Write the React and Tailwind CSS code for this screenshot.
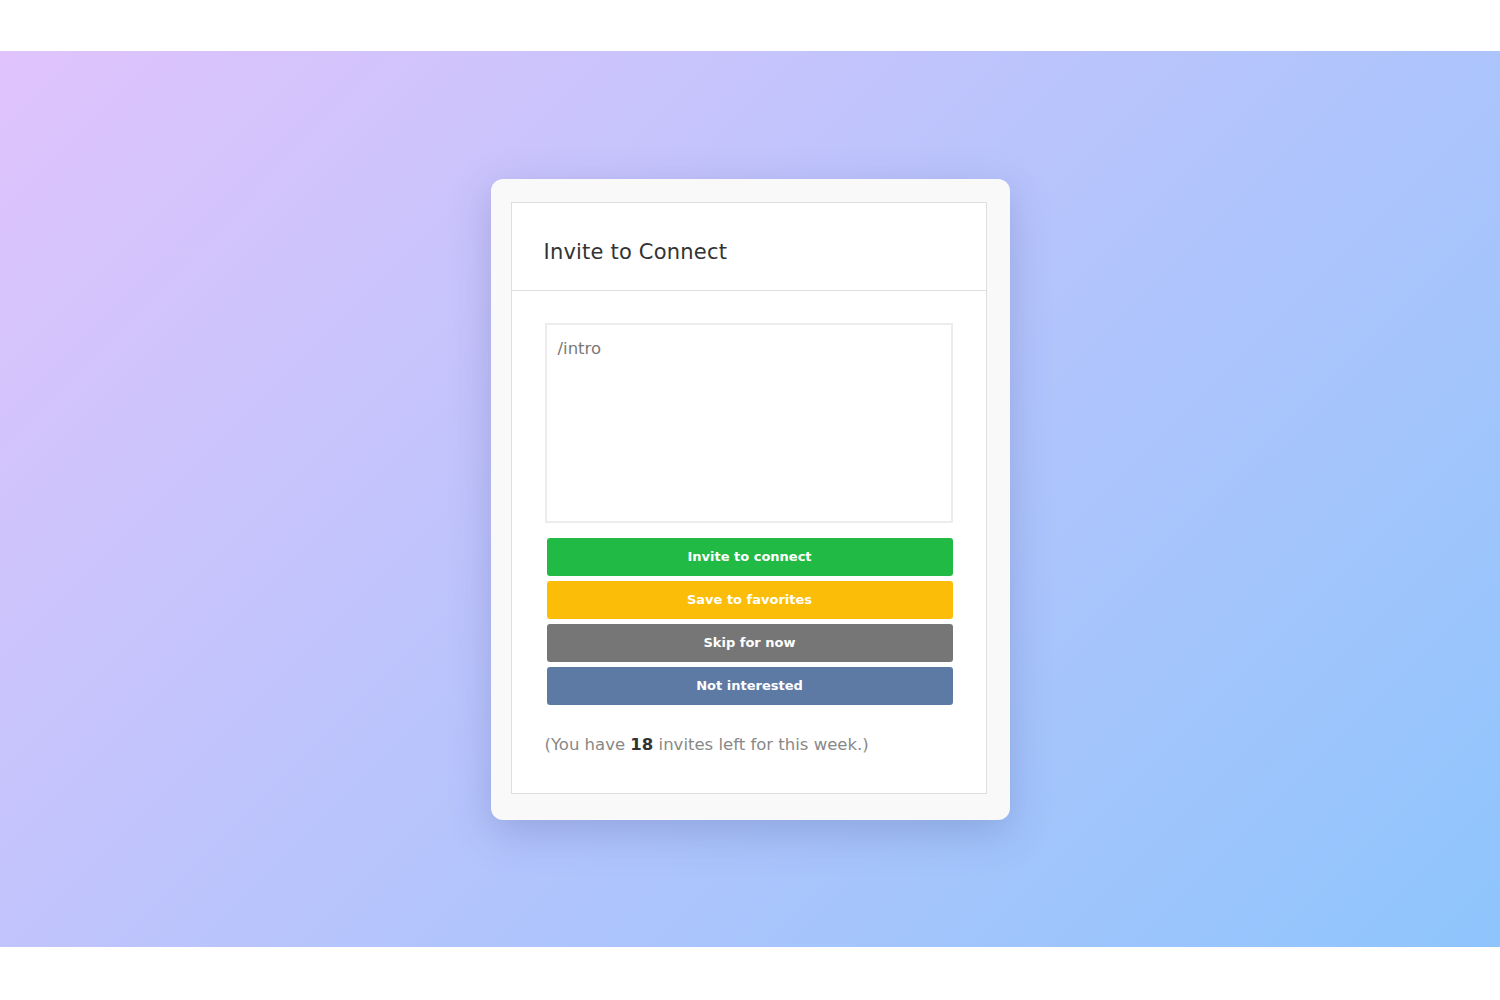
export default function App() {
  const buttons = [
    { label: "Invite to connect", cls: "bg-[#21ba45]" },
    { label: "Save to favorites", cls: "bg-[#fbbd08]" },
    { label: "Skip for now", cls: "bg-[#767676]" },
    { label: "Not interested", cls: "bg-[#5d7aa5]" },
  ];

  return (
    <div className="min-h-[1000px] bg-white pt-[51px] font-['DejaVu_Sans',sans-serif]">
      <div className="h-[896px] bg-[linear-gradient(135deg,#e0c3fc_0%,#8ec5fc_100%)] flex items-center justify-center">
        <div className="w-[519px] rounded-[12px] bg-[#f9f9f9] pl-[20px] pr-[23px] pt-[23px] pb-[26px] shadow-[0_12px_40px_rgba(60,70,140,0.25)]">
          <div className="bg-white border border-[#dedede]">
            {/* header */}
            <div className="h-[88px] px-[32px] pt-[35px] border-b border-[#dedede]">
              <h2 className="text-[21px] leading-[28px] text-[#333] tracking-[0.2px]">Invite to Connect</h2>
            </div>

            {/* body */}
            <div className="px-[33px] pt-[32px] pb-[36px]">
              <textarea
                defaultValue="/intro"
                className="block w-full h-[200px] resize-none border-2 border-[#ececec] px-[11px] py-[12px] text-[16.5px] leading-[24px] text-[#777] outline-none font-['DejaVu_Sans',sans-serif]"
              />
              <div className="mt-[15px] flex flex-col gap-[5px] pl-[2px]">
                {buttons.map((b) => (
                  <button
                    key={b.label}
                    className={`h-[38px] w-full rounded-[3px] text-white text-[13px] font-bold ${b.cls}`}
                  >
                    {b.label}
                  </button>
                ))}
              </div>
              <p className="mt-[28px] text-[16.5px] leading-[24px] text-[#888]">
                (You have <span className="font-bold text-[#333]">18</span> invites left for this week.)
              </p>
            </div>
          </div>
        </div>
      </div>
    </div>
  );
}
